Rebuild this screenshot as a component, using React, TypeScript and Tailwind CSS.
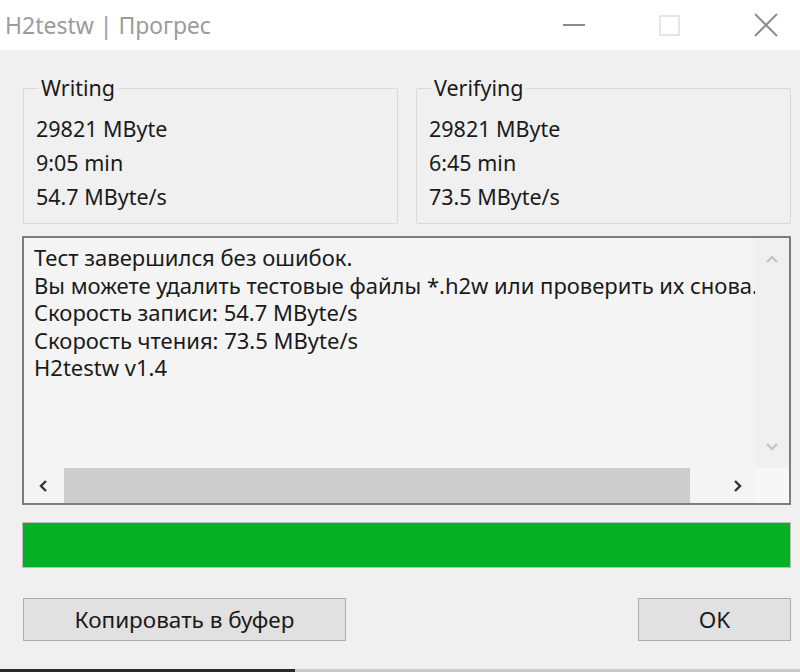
import React from 'react';

const font = { fontFamily: '"Noto Sans", "Open Sans", sans-serif' };

const Chevron: React.FC<{ dir: 'up' | 'down' | 'left' | 'right'; className?: string }> = ({ dir, className }) => {
  const d = {
    up: 'M3 10 L8 5 L13 10',
    down: 'M3 6 L8 11 L13 6',
    left: 'M10 3 L5 8 L10 13',
    right: 'M6 3 L11 8 L6 13',
  }[dir];
  return (
    <svg width="16" height="16" viewBox="0 0 16 16" className={className}>
      <path d={d} fill="none" stroke="currentColor" strokeWidth="2.4" />
    </svg>
  );
};

const Group: React.FC<{ title: string; lines: string[] }> = ({ title, lines }) => (
  <fieldset className="flex-1 h-[148px] border border-[#d9d9d9] rounded-[2px] px-[12px]">
    <legend className="ml-[2px] px-[3px] leading-[24px] text-[21.5px] text-[#1a1a1a]">{title}</legend>
    <div className="pt-[12px] text-[21.5px] leading-[34px] text-[#1a1a1a]">
      {lines.map((l) => (
        <div key={l}>{l}</div>
      ))}
    </div>
  </fieldset>
);

export default function App() {
  const log = [
    'Тест завершился без ошибок.',
    'Вы можете удалить тестовые файлы *.h2w или проверить их снова.',
    'Скорость записи: 54.7 MByte/s',
    'Скорость чтения: 73.5 MByte/s',
    'H2testw v1.4',
  ];

  return (
    <div className="w-[800px] h-[672px] flex flex-col bg-[#f0f0f0] overflow-hidden" style={font}>
      {/* title bar */}
      <div className="h-[50px] bg-white flex items-center">
        <div className="pl-[5px] text-[23px] text-[#9c9c9c] flex-1">H2testw | Прогрес</div>
        <div className="flex items-center h-full">
          <div className="w-[64px] h-full flex items-center justify-center">
            <div className="w-[22px] h-[2px] bg-[#8a8a8a]" />
          </div>
          <div className="w-[126px] h-full flex items-center justify-center">
            <div className="w-[21px] h-[21px] border-2 border-[#e6e6e6]" />
          </div>
          <div className="w-[68px] h-full flex items-center justify-center">
            <svg width="24" height="24" viewBox="0 0 24 24">
              <path d="M1 1 L23 23 M23 1 L1 23" stroke="#8f8f8f" strokeWidth="2" />
            </svg>
          </div>
        </div>
      </div>

      {/* body */}
      <div className="flex-1 flex flex-col pl-[22px] pr-[9px] pt-[26px]">
        <div className="flex gap-[18px] pl-[1px]">
          <Group title="Writing" lines={['29821 MByte', '9:05 min', '54.7 MByte/s']} />
          <Group title="Verifying" lines={['29821 MByte', '6:45 min', '73.5 MByte/s']} />
        </div>

        {/* log box */}
        <div className="mt-[12px] h-[269px] border-2 border-[#7c7c7c] bg-[#f4f4f4] flex flex-col">
          <div className="flex flex-1 min-h-0">
            <div className="flex-1 overflow-hidden pl-[10px] pt-[6px] text-[22px] leading-[27.5px] text-[#1a1a1a] whitespace-nowrap">
              {log.map((l) => (
                <div key={l}>{l}</div>
              ))}
            </div>
            <div className="w-[34px] bg-[#f0f0f0] flex flex-col items-center justify-between py-[14px] text-[#c4c4c4]">
              <Chevron dir="up" />
              <Chevron dir="down" />
            </div>
          </div>
          <div className="h-[35px] flex items-center">
            <div className="w-[40px] flex justify-center text-[#333]">
              <Chevron dir="left" />
            </div>
            <div className="w-[626px] h-full bg-[#cdcdcd]" />
            <div className="flex-1 flex justify-end pr-[10px] text-[#333]">
              <Chevron dir="right" />
            </div>
            <div className="w-[34px] h-full bg-[#f7f7f7]" />
          </div>
        </div>

        {/* progress */}
        <div className="mt-[17px] h-[46px] border border-[#bcbcbc] bg-[#e6e6e6]">
          <div className="h-full w-full bg-[#06b025]" />
        </div>

        {/* buttons */}
        <div className="mt-[30px] flex justify-between pl-[1px]">
          <button className="w-[323px] h-[43px] bg-[#e1e1e1] border border-[#adadad] text-[22.5px] text-[#1a1a1a]">
            Копировать в буфер
          </button>
          <button className="w-[153px] h-[43px] bg-[#e1e1e1] border border-[#adadad] text-[22.5px] text-[#1a1a1a]">
            OK
          </button>
        </div>
      </div>

      {/* taskbar edge */}
      <div className="h-[3px] flex">
        <div className="w-[295px] bg-[#2b2b2b]" />
        <div className="flex-1 bg-[#c8c8c8]" />
      </div>
    </div>
  );
}
